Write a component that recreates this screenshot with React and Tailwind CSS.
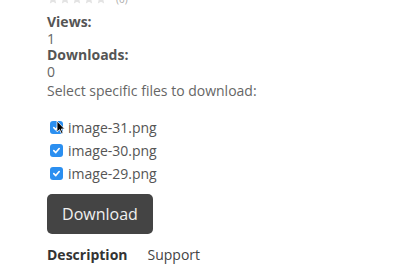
import React from "react";

function Check() {
  return (
    <span className="w-[13px] h-[13px] rounded-[3px] bg-[#2b8ff0] flex items-center justify-center shrink-0">
      <svg width="9" height="9" viewBox="0 0 10 10">
        <path d="M2 5.2 L4.2 7.3 L8 2.8" fill="none" stroke="white" strokeWidth="1.8" strokeLinecap="round" strokeLinejoin="round" />
      </svg>
    </span>
  );
}

function Star() {
  return (
    <svg width="12" height="12" viewBox="0 0 24 24">
      <path d="M12 2l3 6.5 7 .8-5.2 4.8 1.5 7-6.3-3.7-6.3 3.7 1.5-7L2 9.3l7-.8z" fill="#e3e3e3" />
    </svg>
  );
}

export default function App() {
  const files = ["image-31.png", "image-30.png", "image-29.png"];
  return (
    <div className="w-[411px] h-[266px] overflow-hidden bg-white relative" style={{ fontFamily: '"Open Sans", sans-serif' }}>
      <div className="pl-[47px] -mt-[7px]">
        <div className="flex items-center gap-[0px] h-[12px] text-[10px] text-[#aaa]">
          <Star /><Star /><Star /><Star /><Star />
          <span className="ml-[9px]">(0)</span>
        </div>
        <div className="text-[14px] leading-[16.5px] text-[#666] mt-[9px]">
          <div className="font-bold text-[#555]">Views:</div>
          <div>1</div>
          <div className="font-bold text-[#555]">Downloads:</div>
          <div>0</div>
          <div className="mt-[3px]">Select specific files to download:</div>
        </div>
        <div className="mt-[19px] flex flex-col gap-[6px] text-[14px] leading-[17px] text-[#555]">
          {files.map((f, i) => (
            <label key={f} className="flex items-center gap-[5px] pl-[3px] relative">
              <Check />
              <span>{f}</span>
              {i === 0 && (
                <svg className="absolute left-[9px] top-[1px]" width="10" height="15" viewBox="0 0 10 15">
                  <path d="M1 1 L1 12 L3.6 9.6 L5.4 13.6 L7 12.9 L5.3 9 L8.6 9 Z" fill="black" stroke="white" strokeWidth="0.8" />
                </svg>
              )}
            </label>
          ))}
        </div>
        <button className="mt-[12px] w-[106px] h-[40px] rounded-[5px] bg-[#444] text-[#f0f0f0] text-[16px]">
          Download
        </button>
        <div className="mt-[12px] flex gap-[20px] text-[14px] leading-[17px]">
          <span className="font-bold text-[#333]">Description</span>
          <span className="text-[#444]">Support</span>
        </div>
      </div>
    </div>
  );
}
